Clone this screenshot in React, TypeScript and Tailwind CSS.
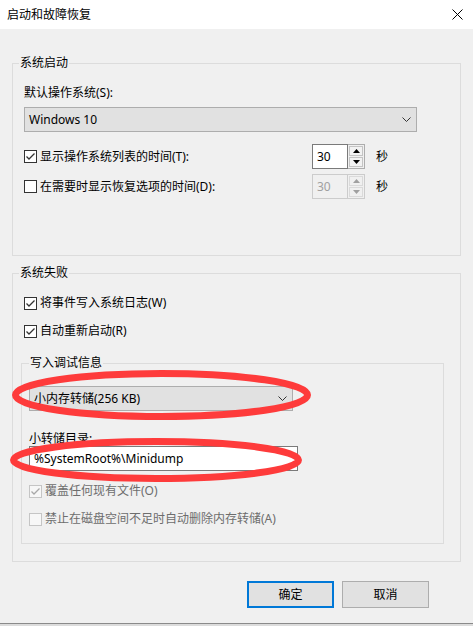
import React from 'react';

type BoxProps = { checked?: boolean; disabled?: boolean };

function CheckBox({ checked, disabled }: BoxProps) {
  return (
    <div
      className={`w-[13px] h-[13px] shrink-0 border flex items-center justify-center ${
        disabled ? 'border-[#c5c5c5] bg-[#f7f7f7]' : 'border-[#333333] bg-white'
      }`}
    >
      {checked && (
        <svg width="11" height="11" viewBox="0 0 11 11">
          <path
            d="M1.5 5.5 L4 8 L9.5 2.5"
            fill="none"
            stroke={disabled ? '#a8a8a8' : '#333333'}
            strokeWidth="1.3"
          />
        </svg>
      )}
    </div>
  );
}

function CheckRow({ label, checked, disabled }: { label: string } & BoxProps) {
  return (
    <div className="flex items-center gap-[3px] h-[16px]">
      <CheckBox checked={checked} disabled={disabled} />
      <span className={`leading-[16px] whitespace-nowrap ${disabled ? 'text-[#6d6d6d]' : 'text-black'}`}>{label}</span>
    </div>
  );
}

function Chevron() {
  return (
    <svg width="9" height="5" viewBox="0 0 9 5" className="shrink-0">
      <path d="M0.5 0.5 L4.5 4.5 L8.5 0.5" fill="none" stroke="#333333" strokeWidth="1" />
    </svg>
  );
}

function Combo({ value, width }: { value: string; width: string }) {
  return (
    <div className={`${width} h-[25px] border border-[#adadad] bg-[#e1e1e1] flex items-center justify-between pl-[4px] pr-[5px]`}>
      <span className="leading-[16px] whitespace-nowrap">{value}</span>
      <Chevron />
    </div>
  );
}

function Arrow({ up, color }: { up?: boolean; color: string }) {
  return (
    <svg width="7" height="4" viewBox="0 0 7 4">
      <path d={up ? 'M0 4 L3.5 0 L7 4 Z' : 'M0 0 L3.5 4 L7 0 Z'} fill={color} />
    </svg>
  );
}

function Spin({ disabled }: { disabled?: boolean }) {
  const arrow = disabled ? '#a0a0a0' : '#000000';
  return (
    <div className="flex h-[25px]">
      <div
        className={`w-[36px] h-full border flex items-center pl-[4px] leading-[16px] ${
          disabled ? 'border-[#cccccc] bg-[#f0f0f0] text-[#a0a0a0]' : 'border-[#7a7a7a] bg-white text-black'
        }`}
      >
        30
      </div>
      <div className={`w-[17px] h-full border-y border-r p-px flex flex-col gap-px ${disabled ? 'border-[#cccccc]' : 'border-[#adadad]'}`}>
        <div className={`flex-1 border flex items-center justify-center ${disabled ? 'border-[#dadada] bg-[#f0f0f0]' : 'border-[#c4c4c4] bg-[#f2f2f2]'}`}>
          <Arrow up color={arrow} />
        </div>
        <div className={`flex-1 border flex items-center justify-center ${disabled ? 'border-[#dadada] bg-[#f0f0f0]' : 'border-[#c4c4c4] bg-[#f2f2f2]'}`}>
          <Arrow color={arrow} />
        </div>
      </div>
    </div>
  );
}

export default function App() {
  return (
    <div className="relative w-[473px] h-[626px] overflow-hidden bg-[#f0f0f0] text-[12px] text-black font-['Noto_Sans','Noto_Sans_CJK_SC',sans-serif]">
      {/* title bar */}
      <div className="h-[29px] bg-white flex items-center justify-between pl-[7px] pr-[10px]">
        <span className="leading-[16px]">启动和故障恢复</span>
        <svg width="11" height="11" viewBox="0 0 11 11">
          <path d="M0.5 0.5 L10.5 10.5 M10.5 0.5 L0.5 10.5" stroke="#000" strokeWidth="1" />
        </svg>
      </div>

      {/* 系统启动 */}
      <fieldset className="ml-[12px] mt-[26px] w-[449px] border border-[#dcdcdc]">
        <legend className="ml-[6px] px-px leading-[16px]">系统启动</legend>
        <div className="h-[184px] pt-[14px] pl-[11px]">
          <div className="leading-[16px]">默认操作系统(S):</div>
          <div className="mt-[6px]">
            <Combo value="Windows 10" width="w-[393px]" />
          </div>
          <div className="mt-[12px] flex items-center h-[25px]">
            <div className="w-[288px]">
              <CheckRow checked label="显示操作系统列表的时间(T):" />
            </div>
            <Spin />
            <span className="ml-[11px] leading-[16px]">秒</span>
          </div>
          <div className="mt-[5px] flex items-center h-[25px]">
            <div className="w-[288px]">
              <CheckRow label="在需要时显示恢复选项的时间(D):" />
            </div>
            <Spin disabled />
            <span className="ml-[11px] leading-[16px]">秒</span>
          </div>
        </div>
      </fieldset>

      {/* 系统失败 */}
      <fieldset className="ml-[12px] mt-[9px] w-[449px] border border-[#dcdcdc]">
        <legend className="ml-[6px] px-px leading-[16px]">系统失败</legend>
        <div className="pt-[14px] pl-[11px] pb-[17px]">
          <CheckRow checked label="将事件写入系统日志(W)" />
          <div className="mt-[12px]">
            <CheckRow checked label="自动重新启动(R)" />
          </div>
          <fieldset className="-ml-[3px] mt-[16px] w-[423px] border border-[#dcdcdc]">
            <legend className="ml-[7px] px-px leading-[16px]">写入调试信息</legend>
            <div className="pt-[15px] pl-[7px] pb-[16px]">
              <Combo value="小内存转储(256 KB)" width="w-[264px]" />
              <div className="mt-[21px] leading-[14px] h-[14px]">小转储目录:</div>
              <div className="w-[269px] h-[25px] border border-[#7a7a7a] bg-white flex items-center pl-[4px] leading-[16px]">
                %SystemRoot%\Minidump
              </div>
              <div className="mt-[12px]">
                <CheckRow checked disabled label="覆盖任何现有文件(O)" />
              </div>
              <div className="mt-[12px]">
                <CheckRow disabled label="禁止在磁盘空间不足时自动删除内存转储(A)" />
              </div>
            </div>
          </fieldset>
        </div>
      </fieldset>

      {/* buttons */}
      <div className="mt-[19px] ml-[247px] flex gap-[8px]">
        <button className="w-[87px] h-[27px] border-2 border-[#0078d7] bg-[#e1e1e1] leading-[16px]">确定</button>
        <button className="w-[87px] h-[27px] border border-[#adadad] bg-[#e1e1e1] leading-[16px]">取消</button>
      </div>

      <div className="absolute left-0 right-0 top-[623px] h-[3px] border-t border-[#8a8a8a] bg-[#dcdcdc]" />

      {/* red annotation ellipses */}
      <svg className="absolute left-0 top-0 pointer-events-none" width="473" height="626" viewBox="0 0 473 626">
        <ellipse cx="161.5" cy="395" rx="146" ry="21.5" fill="none" stroke="#fe3b3b" strokeWidth="7" />
        <ellipse cx="156" cy="460" rx="142.5" ry="18.5" fill="none" stroke="#fe3b3b" strokeWidth="7" />
      </svg>
    </div>
  );
}
